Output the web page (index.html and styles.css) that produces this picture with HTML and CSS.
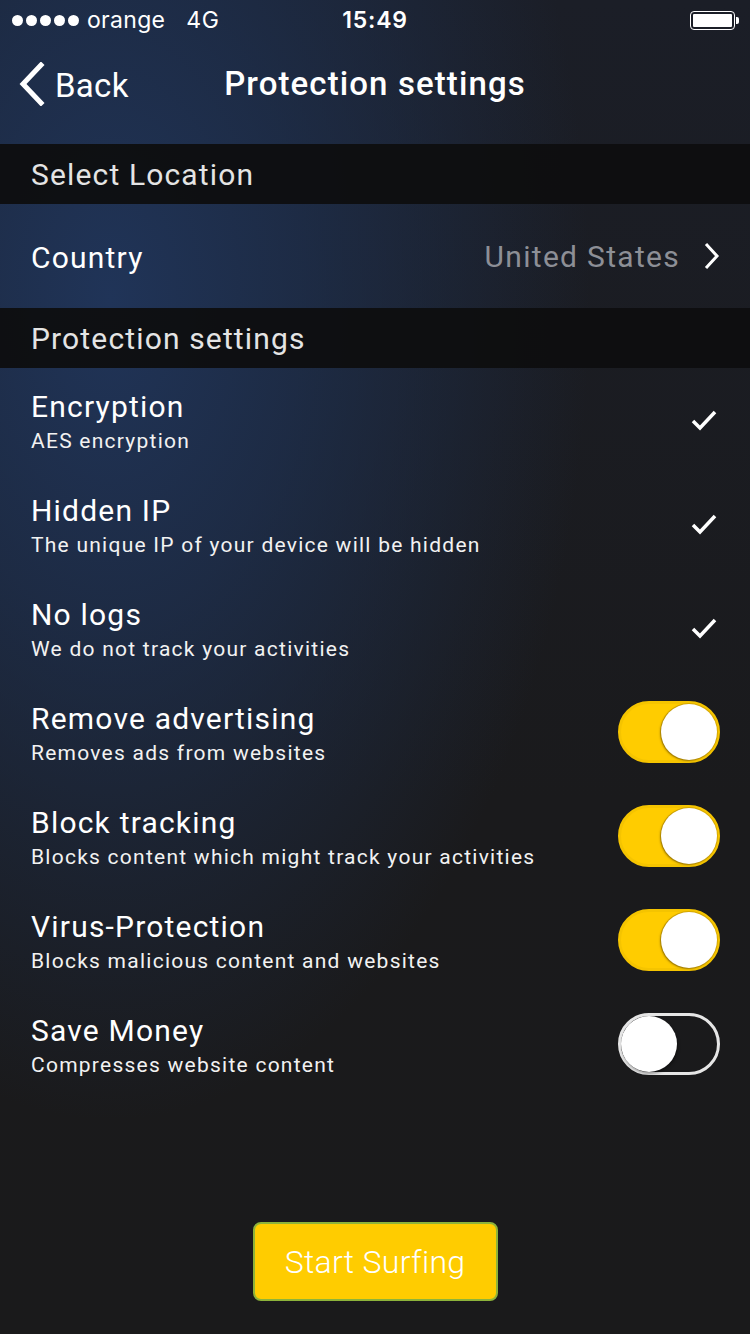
FILE: index.html
```html
<!DOCTYPE html>
<html>
<head>
<meta charset="utf-8">
<link rel="stylesheet" href="styles.css">
</head>
<body>
<div class="screen">
  <div class="status">
    <div class="status-left">
      <span class="dots"><i></i><i></i><i></i><i></i><i></i></span>
      <span class="carrier">orange</span>
      <span class="net">4G</span>
    </div>
    <div class="time">15:49</div>
    <div class="battery"><span class="batt-body"><span class="batt-fill"></span></span><span class="batt-nub"></span></div>
  </div>

  <div class="navbar">
    <div class="back">
      <svg class="back-chev" width="28" height="44" viewBox="0 0 28 44"><path d="M24 3 L6 22 L24 41" fill="none" stroke="#fff" stroke-width="5" stroke-linecap="square"/></svg>
      <span>Back</span>
    </div>
    <div class="title">Protection settings</div>
  </div>

  <div class="section">Select Location</div>
  <div class="row">
    <div class="row-text"><div class="row-title">Country</div></div>
    <div class="row-right">
      <span class="value">United States</span>
      <svg width="16" height="28" viewBox="0 0 16 28"><path d="M2 2 L13 14 L2 26" fill="none" stroke="#fff" stroke-width="3"/></svg>
    </div>
  </div>

  <div class="section">Protection settings</div>

  <div class="row">
    <div class="row-text"><div class="row-title">Encryption</div><div class="row-sub">AES encryption</div></div>
    <div class="row-right"><svg class="check" width="28" height="24" viewBox="0 0 28 24"><path d="M3 13 L10 20 L25 4" fill="none" stroke="#fff" stroke-width="3.5"/></svg></div>
  </div>
  <div class="row">
    <div class="row-text"><div class="row-title">Hidden IP</div><div class="row-sub">The unique IP of your device will be hidden</div></div>
    <div class="row-right"><svg class="check" width="28" height="24" viewBox="0 0 28 24"><path d="M3 13 L10 20 L25 4" fill="none" stroke="#fff" stroke-width="3.5"/></svg></div>
  </div>
  <div class="row">
    <div class="row-text"><div class="row-title">No logs</div><div class="row-sub">We do not track your activities</div></div>
    <div class="row-right"><svg class="check" width="28" height="24" viewBox="0 0 28 24"><path d="M3 13 L10 20 L25 4" fill="none" stroke="#fff" stroke-width="3.5"/></svg></div>
  </div>
  <div class="row">
    <div class="row-text"><div class="row-title">Remove advertising</div><div class="row-sub">Removes ads from websites</div></div>
    <div class="row-right"><span class="toggle on"><span class="knob"></span></span></div>
  </div>
  <div class="row">
    <div class="row-text"><div class="row-title">Block tracking</div><div class="row-sub">Blocks content which might track your activities</div></div>
    <div class="row-right"><span class="toggle on"><span class="knob"></span></span></div>
  </div>
  <div class="row">
    <div class="row-text"><div class="row-title">Virus-Protection</div><div class="row-sub">Blocks malicious content and websites</div></div>
    <div class="row-right"><span class="toggle on"><span class="knob"></span></span></div>
  </div>
  <div class="row">
    <div class="row-text"><div class="row-title">Save Money</div><div class="row-sub">Compresses website content</div></div>
    <div class="row-right"><span class="toggle"><span class="knob"></span></span></div>
  </div>

  <div class="footer">
    <button class="start">Start Surfing</button>
  </div>
</div>
</body>
</html>
```

FILE: styles.css
```css
* { box-sizing: border-box; }
html, body { margin: 0; padding: 0; }
body {
  width: 750px;
  height: 1334px;
  overflow: hidden;
  background: #1a1a1b;
  font-family: Roboto, "Noto Sans", sans-serif;
  color: #fff;
}
.screen {
  width: 750px;
  height: 1334px;
  display: flex;
  flex-direction: column;
  background:
    radial-gradient(ellipse 480px 820px at 110px 300px, rgba(32,52,88,1) 0%, rgba(30,48,80,0.75) 40%, rgba(26,26,28,0) 100%),
    linear-gradient(180deg, #1b1e27 0%, #1a1a1c 60%, #1a1a1b 100%);
}
.status {
  height: 40px;
  display: flex;
  align-items: center;
  justify-content: space-between;
  padding: 0 11px 0 12px;
  position: relative;
  font-family: Inter, "Noto Sans", sans-serif;
  font-size: 23px;
}
.status-left { display: flex; align-items: center; }
.dots { display: flex; gap: 3px; margin-right: 8px; }
.dots i { width: 11px; height: 11px; border-radius: 50%; background: #fff; display: block; }
.carrier { letter-spacing: 0.3px; }
.net { margin-left: 21px; letter-spacing: 0.5px; }
.time {
  position: absolute;
  left: 0; right: 0;
  text-align: center;
  font-weight: 600;
  font-size: 23px;
  letter-spacing: 0.8px;
  pointer-events: none;
}
.battery { display: flex; align-items: center; }
.batt-body {
  width: 45px; height: 19px;
  border: 1.5px solid #fff;
  border-radius: 4px;
  padding: 2px;
  display: block;
}
.batt-fill { display: block; width: 100%; height: 100%; background: #fff; border-radius: 1px; }
.batt-nub { width: 3px; height: 7px; background: #fff; border-radius: 0 2px 2px 0; margin-left: 1px; }

.navbar {
  height: 104px;
  display: flex;
  align-items: flex-start;
  position: relative;
  padding: 22px 0 0 17px;
}
.back { display: flex; align-items: center; gap: 10px; font-size: 33px; height: 44px; }
.back span { margin-top: 2px; letter-spacing: 0.3px; }
.title {
  position: absolute;
  top: 22px;
  left: 0; right: 0;
  line-height: 44px;
  text-align: center;
  font-weight: 500;
  font-size: 33px;
  letter-spacing: 1.1px;
  pointer-events: none;
}

.section {
  height: 60px;
  background: rgba(14,14,15,0.94);
  display: flex;
  align-items: center;
  padding-left: 31px;
  font-size: 30px;
  letter-spacing: 1.15px;
  color: #e4e4e4;
}
.row {
  height: 104px;
  display: flex;
  align-items: center;
  justify-content: space-between;
  padding: 0 30px 0 31px;
}
.row-text { padding-top: 3px; }
.row-title { font-size: 30px; line-height: 36px; letter-spacing: 1.2px; }
.row-sub { font-size: 21px; line-height: 26px; margin-top: 3px; letter-spacing: 1.25px; color: #f2f2f2; }
.row-right { display: flex; align-items: center; gap: 24px; }
.value { font-size: 30px; color: #8d8f96; letter-spacing: 1.3px; }
.check { margin-right: 2px; }

.toggle {
  width: 102px; height: 62px;
  border-radius: 31px;
  border: 3px solid #e6e6e6;
  position: relative;
  display: block;
}
.toggle .knob {
  position: absolute;
  top: 0; left: 0;
  width: 56px; height: 56px;
  border-radius: 50%;
  background: #fff;
  box-shadow: 1px 2px 3px rgba(0,0,0,0.35);
}
.toggle.on { background: #ffcc00; border-color: #f5c400; }
.toggle.on .knob { left: auto; right: 0; box-shadow: -1px 1px 2px rgba(120,90,0,0.6), 0 0 0 1px #d9ab00; }

.footer {
  flex: 1;
  display: flex;
  justify-content: center;
  align-items: flex-end;
  padding-bottom: 33px;
}
.start {
  width: 245px; height: 79px;
  background: #ffcc00;
  border: 2px solid #8db33a;
  border-radius: 8px;
  color: #fff;
  font-family: Roboto, sans-serif;
  font-weight: 300;
  font-size: 32px;
  letter-spacing: 0.3px;
}
```
